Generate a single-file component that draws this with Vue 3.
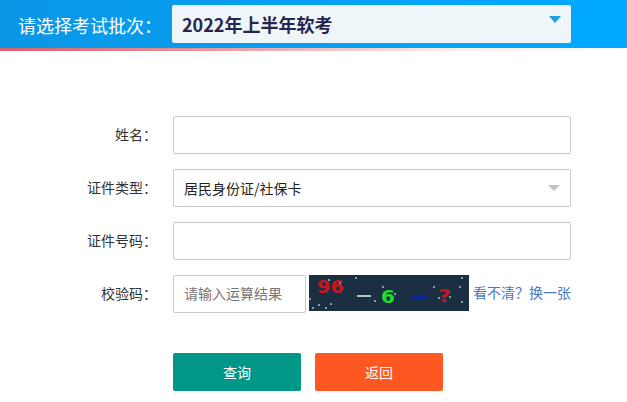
<script setup>
const dots = [[47,3],[74,12],[86,19],[66,26],[20,5],[1,24],[4,33],[10,30],[17,33],[22,29],[125,12],[130,23],[141,22],[151,12],[153,3],[153,27],[31,8]]
</script>

<template>
  <div class="page">
    <header class="top">
      <span class="top-label">请选择考试批次：</span>
      <div class="batch">
        <span>2022年上半年软考</span>
        <i class="batch-arrow"></i>
      </div>
    </header>
    <div class="rule"></div>

    <form class="form" @submit.prevent>
      <div class="row">
        <label>姓名：</label>
        <div class="field"></div>
      </div>
      <div class="row">
        <label>证件类型：</label>
        <div class="field select">
          <span>居民身份证/社保卡</span>
          <i class="select-arrow"></i>
        </div>
      </div>
      <div class="row">
        <label>证件号码：</label>
        <div class="field"></div>
      </div>
      <div class="row">
        <label>校验码：</label>
        <div class="field code"><span>请输入运算结果</span></div>
        <svg class="captcha" width="160" height="36" viewBox="0 0 160 36">
          <rect width="160" height="36" fill="#1a2f42" />
          <circle v-for="(d, i) in dots" :key="i" :cx="d[0]" :cy="d[1]" r="0.9" fill="#c3d0d8" />
          <text x="8" y="18" class="c-big" fill="#c8161d" textLength="27" lengthAdjust="spacingAndGlyphs">96</text>
          <rect x="48" y="20" width="14" height="2" fill="#b7c2c8" />
          <text x="72" y="28" class="c-big" fill="#1fe02c" textLength="14" lengthAdjust="spacingAndGlyphs">6</text>
          <rect x="103" y="21" width="15" height="4" fill="#10249a" />
          <text x="129" y="27" class="c-big" fill="#c8161d" textLength="13" lengthAdjust="spacingAndGlyphs">?</text>
        </svg>
        <a class="refresh">看不清？换一张</a>
      </div>
      <div class="actions">
        <button type="button" class="btn query">查询</button>
        <button type="button" class="btn back">返回</button>
      </div>
    </form>
  </div>
</template>

<style>
html, body { margin: 0; background: #fff; }
</style>

<style scoped>
.page {
  width: 627px;
  height: 402px;
  overflow: hidden;
  font-family: "Noto Sans CJK SC", "Liberation Sans", sans-serif;
  font-size: 14px;
  color: #333;
}
.top {
  height: 48px;
  box-sizing: border-box;
  padding: 5px 56px 5px 0;
  display: flex;
  background: linear-gradient(90deg, #0b96e6 0%, #00aaff 100%);
}
.top-label {
  width: 172px;
  box-sizing: border-box;
  padding-left: 18px;
  line-height: 40px;
  font-size: 18px;
  color: #fff;
  white-space: nowrap;
}
.batch {
  flex: 1;
  display: flex;
  align-items: center;
  justify-content: space-between;
  padding: 0 10px;
  background: #eef6f9;
  border-radius: 2px;
  font-size: 18px;
  font-weight: 700;
  color: #26264d;
}
.batch-arrow {
  width: 0;
  height: 0;
  margin: 0 0 10px;
  border-left: 6px solid transparent;
  border-right: 6px solid transparent;
  border-top: 7px solid #1f9fe6;
}
.rule {
  height: 3px;
  background: linear-gradient(90deg, #d9606b 0%, #e88f98 30%, #fbe9e7 70%, #fff 100%);
}
.form {
  padding: 65px 56px 0 0;
  display: flex;
  flex-direction: column;
  gap: 15px;
}
.row {
  display: flex;
  align-items: flex-start;
}
.row label {
  width: 157px;
  margin-right: 16px;
  text-align: right;
  line-height: 36px;
  flex: none;
  color: #333;
}
.field {
  flex: 1;
  height: 38px;
  box-sizing: border-box;
  border: 1px solid #c9c9c9;
  border-radius: 2px;
  background: #fff;
}
.select {
  display: flex;
  align-items: center;
  justify-content: space-between;
  padding: 0 10px;
  color: #222;
}
.select-arrow {
  width: 0;
  height: 0;
  border-left: 6px solid transparent;
  border-right: 6px solid transparent;
  border-top: 6px solid #c2c2c2;
}
.code {
  flex: none;
  width: 133px;
  padding-left: 10px;
  line-height: 35px;
  color: #757575;
}
.captcha {
  margin-left: 3px;
  flex: none;
}
.c-big {
  font-family: "DejaVu Sans", sans-serif;
  font-size: 18px;
  font-weight: 700;
}
.refresh {
  margin-left: 4px;
  line-height: 35px;
  color: #4a78c4;
  white-space: nowrap;
}
.actions {
  display: flex;
  gap: 14px;
  padding: 25px 0 0 173px;
}
.btn {
  width: 128px;
  height: 38px;
  border: 0;
  border-radius: 2px;
  color: #fff;
  font: inherit;
}
.query { background: #009688; }
.back { background: #ff5722; }
</style>
